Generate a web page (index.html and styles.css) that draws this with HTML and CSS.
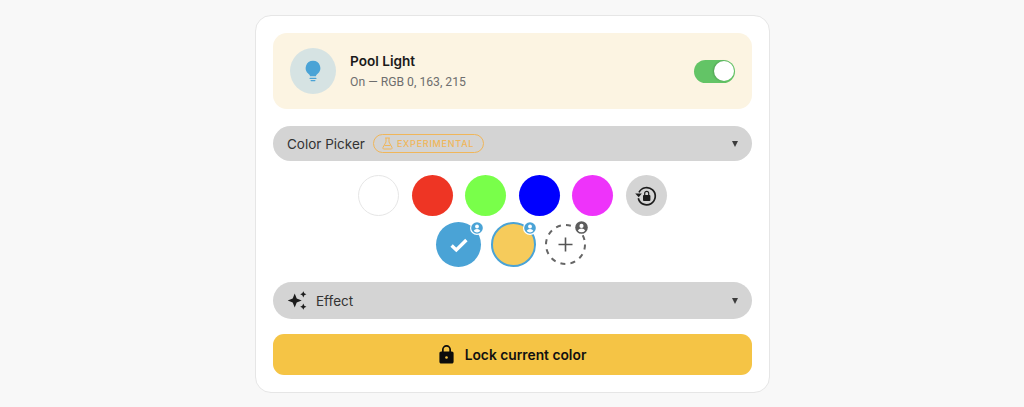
FILE: index.html
```html
<!DOCTYPE html>
<html lang="en">
<head>
<meta charset="utf-8">
<title>Pool Light</title>
<link rel="stylesheet" href="styles.css">
</head>
<body>
<main class="card">
  <section class="header">
    <div class="bulb">
      <svg width="24" height="24" viewBox="0 0 24 24"><path fill="#4aa3d6" d="M12 1.700a7.400 7.400 0 0 0-4.400 13.300c.9.7 1.300 1.300 1.400 2.300h6c.1-1 .5-1.600 1.400-2.300A7.400 7.400 0 0 0 12 1.700z"/><rect x="8.500" y="18.800" width="7" height="1.300" rx=".6" fill="#4aa3d6"/><rect x="9.500" y="20.900" width="5" height="1.300" rx=".6" fill="#4aa3d6"/></svg>
    </div>
    <div class="titles">
      <div class="title">Pool Light</div>
      <div class="subtitle">On — RGB 0, 163, 215</div>
    </div>
    <div class="toggle"><span class="knob"></span></div>
  </section>

  <div class="select picker">
    <span class="select-label">Color Picker</span>
    <span class="badge">
      <svg width="11" height="13" viewBox="0 0 11 13" fill="none" stroke="#f0b65a" stroke-width="1"><path d="M3.200 1h4.600M4 1v4L1 10.400c-.4.800 0 1.600.9 1.600h7.200c.9 0 1.300-.8.900-1.600L7 5V1M2.600 8.500h5.800"/></svg>
      EXPERIMENTAL
    </span>
    <span class="caret"></span>
  </div>

  <div class="swatches">
    <div class="row">
      <span class="swatch white"></span>
      <span class="swatch red"></span>
      <span class="swatch green"></span>
      <span class="swatch blue"></span>
      <span class="swatch magenta"></span>
      <span class="swatch grey">
        <svg width="24" height="24" viewBox="0 0 24 24" fill="none"><path d="M5 8.300A8.600 8.600 0 1 1 4.300 14.200" stroke="#1c1c1c" stroke-width="1.700"/><path d="M1.200 9.400h6.600L4.700 13.200z" fill="#1c1c1c"/><rect x="9" y="11" width="7.400" height="6" rx=".9" fill="#1c1c1c"/><path d="M10.700 11.200V9.300a2 2 0 0 1 4 0v1.900" stroke="#1c1c1c" stroke-width="1.200"/></svg>
      </span>
    </div>
    <div class="row row-custom">
      <span class="swatch custom selected">
        <svg width="20" height="20" viewBox="0 0 20 20" fill="none"><path d="M2.600 10.600l4.700 4.400L17.400 5" stroke="#fff" stroke-width="3.400"/></svg>
        <span class="user-badge"><svg viewBox="0 0 12 12" width="12" height="12"><circle cx="6" cy="6" r="5.800" fill="#4aa3d6"/><circle cx="6" cy="4.500" r="1.900" fill="#fff"/><path d="M2.700 9c.5-1.300 1.800-2 3.300-2s2.800.7 3.300 2A4.600 4.600 0 0 1 6 10.400 4.600 4.600 0 0 1 2.700 9z" fill="#fff"/></svg></span>
      </span>
      <span class="swatch custom yellow">
        <span class="user-badge"><svg viewBox="0 0 12 12" width="12" height="12"><circle cx="6" cy="6" r="5.800" fill="#4aa3d6"/><circle cx="6" cy="4.500" r="1.900" fill="#fff"/><path d="M2.700 9c.5-1.300 1.800-2 3.300-2s2.800.7 3.300 2A4.600 4.600 0 0 1 6 10.400 4.600 4.600 0 0 1 2.700 9z" fill="#fff"/></svg></span>
      </span>
      <span class="swatch custom add">
        <svg class="dash" width="41" height="41" viewBox="0 0 41 41" fill="none"><circle cx="20.500" cy="20.500" r="19.500" stroke="#666" stroke-width="2" stroke-dasharray="5 5.200"/></svg>
        <svg width="15" height="15" viewBox="0 0 15 15"><path d="M7.500.5v14M.5 7.500h14" stroke="#555" stroke-width="1.600"/></svg>
        <span class="user-badge"><svg viewBox="0 0 12 12" width="13" height="13"><circle cx="6" cy="6" r="5.800" fill="#5c5c5c"/><circle cx="6" cy="4.500" r="1.900" fill="#fff"/><path d="M2.700 9c.5-1.300 1.800-2 3.300-2s2.800.7 3.300 2A4.600 4.600 0 0 1 6 10.400 4.600 4.600 0 0 1 2.700 9z" fill="#fff"/></svg></span>
      </span>
    </div>
  </div>

  <div class="select effect">
    <svg width="21" height="21" viewBox="0 0 21 21" fill="#1c1c1c"><path d="M7.700 3.600l2 5 5 2-5 2-2 5-2-5-5-2 5-2zM16.300 1.200l1 2.100 2.100 1-2.100 1-1 2.100-1-2.100-2.100-1 2.100-1zM16.300 13.600l1 2.100 2.100 1-2.100 1-1 2.100-1-2.100-2.100-1 2.100-1z"/></svg>
    <span class="select-label">Effect</span>
    <span class="caret"></span>
  </div>

  <button class="lock" type="button">
    <svg width="15" height="19" viewBox="0 0 15 19"><path fill="#0c0c0c" d="M3 6.400V4.600a4.500 4.500 0 0 1 9 0v1.800h.8c1 0 1.800.8 1.800 1.800v8.600c0 1-.8 1.800-1.800 1.800H2.200c-1 0-1.800-.8-1.800-1.800V8.200c0-1 .8-1.800 1.800-1.800zM4.700 6.400h5.600V4.600a2.800 2.800 0 0 0-5.600 0z"/><circle cx="7.500" cy="12.500" r="1.300" fill="#f5c445"/></svg>
    Lock current color
  </button>
</main>
</body>
</html>
```

FILE: styles.css
```css
* { box-sizing: border-box; }
html, body { margin: 0; padding: 0; }
body {
  width: 1024px;
  height: 407px;
  overflow: hidden;
  background: #f8f8f8;
  font-family: Inter, "Liberation Sans", sans-serif;
  padding-top: 15px;
}
.card {
  width: 515px;
  height: 378px;
  margin-left: 255px;
  padding: 17px 17px 16px;
  background: #fff;
  border: 1.5px solid #e6e6e6;
  border-radius: 16px;
  display: flex;
  flex-direction: column;
}
.header {
  height: 76px;
  background: #fcf4e2;
  border-radius: 14px;
  padding: 0 17px;
  display: flex;
  align-items: center;
}
.bulb {
  width: 46px;
  height: 46px;
  border-radius: 50%;
  background: #d6e3e3;
  display: flex;
  align-items: center;
  justify-content: center;
}
.titles { margin-left: 14px; flex: 1; }
.title {
  font-size: 13.6px;
  font-weight: 600;
  line-height: 18px;
  color: #1a1a1a;
}
.subtitle {
  font-family: Roboto, sans-serif;
  font-size: 12.200px;
  line-height: 16px;
  margin-top: 4px;
  color: #6e6e6e;
}
.toggle {
  width: 41px;
  height: 23px;
  border-radius: 12px;
  background: #63c466;
  padding: 1.500px;
  display: flex;
  justify-content: flex-end;
}
.knob {
  width: 20px;
  height: 20px;
  border-radius: 50%;
  background: #fff;
  box-shadow: -1px 0 2px rgba(0, 0, 0, .2);
}
.select {
  background: #d4d4d4;
  display: flex;
  align-items: center;
  border-radius: 18.500px;
  padding: 0 14px;
}
.select-label {
  font-size: 13.500px;
  color: #333;
}
.picker { height: 35px; margin-top: 17px; }
.badge {
  margin-left: 8px;
  height: 19px;
  padding: 0 9px 0 8px;
  border: 1px solid #f0b65a;
  border-radius: 10px;
  display: inline-flex;
  align-items: center;
  gap: 4px;
  color: #f0b65a;
  font-size: 9px;
  font-weight: 500;
  letter-spacing: .75px;
}
.caret {
  margin-left: auto;
  margin-right: .5px;
  width: 0;
  height: 0;
  border-left: 3.500px solid transparent;
  border-right: 3.500px solid transparent;
  border-top: 6.500px solid #3c3c3c;
}
.swatches {
  margin-top: 14px;
  display: flex;
  flex-direction: column;
  gap: 6px;
  align-items: center;
}
.row { display: flex; gap: 12.500px; align-items: center; }
.row-custom { gap: 9.500px; padding-right: 3px; }
.swatch {
  position: relative;
  width: 41px;
  height: 41px;
  border-radius: 50%;
  display: flex;
  align-items: center;
  justify-content: center;
}
.custom { width: 45px; height: 45px; }
.white { background: #fff; border: 1px solid #e6e6e6; }
.red { background: #ee3524; }
.green { background: #79ff4a; }
.blue { background: #0000ff; }
.magenta { background: #ee33fa; }
.grey { background: #d4d4d4; }
.selected { background: #4aa3d6; }
.yellow { background: #f6cb5b; border: 2px solid #4aa3d6; }
.add { background: #fff; width: 41px; height: 41px; }
.dash { position: absolute; left: 0; top: 0; }
.user-badge {
  position: absolute;
  top: -1px;
  right: -2.500px;
  width: 14px;
  height: 14px;
  border-radius: 50%;
  background: #fff;
  display: flex;
  align-items: center;
  justify-content: center;
}
.yellow .user-badge { top: -3px; right: -3.500px; }
.add .user-badge { top: -3.500px; }
.effect { height: 37px; margin-top: 15px; gap: 8px; }
.lock {
  height: 41px;
  margin-top: 15px;
  border: 0;
  border-radius: 11px;
  background: #f5c445;
  display: flex;
  align-items: center;
  justify-content: center;
  gap: 11px;
  font-family: Inter, sans-serif;
  font-size: 13.800px;
  font-weight: 600;
  color: #111;
}
```
